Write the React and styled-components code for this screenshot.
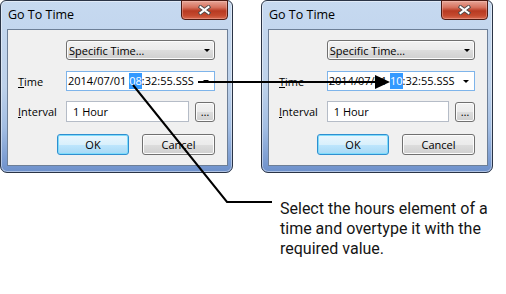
import React from 'react'
import styled, { createGlobalStyle } from 'styled-components'

const GlobalStyle = createGlobalStyle`
  html, body { margin: 0; padding: 0; background: #fff; }
  body { font-family: "Open Sans", "Liberation Sans", sans-serif; }
`

const Page = styled.div`
  position: relative;
  width: 506px;
  height: 294px;
  overflow: hidden;
  background: #fff;
`

const Windows = styled.div`
  display: flex;
  gap: 28px;
  align-items: flex-start;
`

const Window = styled.div`
  box-sizing: border-box;
  width: ${p => p.$w}px;
  height: 173px;
  border: 1px solid #2a3446;
  border-radius: 6px 6px 7px 7px;
  background: linear-gradient(180deg, #c6d9f0 0%, #bdd1ea 50%, #a3bee3 74%, #6d90cb 100%);
  box-shadow: inset 0 0 0 1px rgba(255, 255, 255, 0.45);
  display: flex;
  flex-direction: column;
  padding: 0 4px 6px 6px;
`

const TitleBar = styled.div`
  height: 28px;
  display: flex;
  justify-content: space-between;
  align-items: flex-start;
`

const Title = styled.div`
  padding: 5px 0 0 1px;
  font-size: 12.5px;
  color: #000;
`

const Close = styled.div`
  box-sizing: border-box;
  width: 47px;
  height: 20px;
  margin-top: -1px;
  border: 1px solid #4d1a12;
  border-radius: 0 0 4px 4px;
  background: linear-gradient(180deg, #e6a597 0%, #d7735f 35%, #b83a22 55%, #c4492e 80%, #d86a50 100%);
  box-shadow: inset 0 0 0 1px rgba(255, 210, 200, 0.35);
  display: flex;
  align-items: center;
  justify-content: center;
`

const Client = styled.div`
  flex: 1;
  border: 1px solid #6d7f97;
  background: #f0f0f0;
  padding: 10px 12px 0 10px;
`

const Row = styled.div`
  display: flex;
  align-items: center;
  height: ${p => p.$h || 20}px;
  margin-top: ${p => p.$mt || 0}px;
  justify-content: ${p => p.$end ? 'flex-end' : 'flex-start'};
  gap: ${p => p.$gap || 0}px;
`

const Label = styled.div`
  width: 48px;
  font-size: 11px;
  color: #000;
  u { text-decoration: underline; text-underline-offset: 1px; }
`

const Combo = styled.div`
  box-sizing: border-box;
  width: 149px;
  height: 20px;
  border: 1px solid #707070;
  border-radius: 3px;
  background: linear-gradient(180deg, #f2f2f2 0%, #ebebeb 50%, #dddddd 51%, #cfcfcf 100%);
  box-shadow: inset 0 0 0 1px #fcfcfc;
  display: flex;
  align-items: center;
  justify-content: space-between;
  padding: 0 4px 0 2px;
  font-size: 11px;
  color: #000;
`

const Arrow = styled.span`
  width: 0;
  height: 0;
  border-left: ${p => p.$s}px solid transparent;
  border-right: ${p => p.$s}px solid transparent;
  border-top: ${p => p.$s}px solid #000;
`

const Field = styled.div`
  box-sizing: border-box;
  width: ${p => p.$w}px;
  height: ${p => p.$h || 20}px;
  border: 1px solid ${p => p.$focus ? '#7eb4ea' : '#b5bcc7'};
  background: #fff;
  display: flex;
  align-items: center;
  justify-content: space-between;
  padding: 0 5px 0 ${p => p.$pl}px;
  font-size: 11px;
  color: #000;
  white-space: pre;
`

const Sel = styled.span`
  display: inline-block;
  background: #3399ff;
  color: #fff;
  line-height: 16px;
`

const Button = styled.div`
  box-sizing: border-box;
  width: ${p => p.$w}px;
  height: ${p => p.$h || 21}px;
  border: 1px solid ${p => p.$default ? '#2f8fd0' : '#707070'};
  border-radius: 3px;
  background: ${p => p.$default
    ? 'linear-gradient(180deg, #eaf6fd 0%, #d9f0fc 50%, #bee6fd 51%, #a7d9f5 100%)'
    : 'linear-gradient(180deg, #f2f2f2 0%, #ebebeb 50%, #dddddd 51%, #cfcfcf 100%)'};
  box-shadow: inset 0 0 0 1px ${p => p.$default ? '#7fdcfb' : '#fcfcfc'};
  display: flex;
  align-items: center;
  justify-content: center;
  margin-left: ${p => p.$ml || 0}px;
  font-size: 11px;
  color: #000;
`

const Caption = styled.div`
  margin: 26px 0 0 280px;
  font-family: Roboto, "Liberation Sans", sans-serif;
  font-size: 16px;
  line-height: 20px;
  color: #151515;
`

const Overlay = styled.svg`
  position: absolute;
  left: 0;
  top: 0;
  pointer-events: none;
`

function CloseGlyph() {
  return (
    <svg width="13" height="10" viewBox="0 0 13 10">
      <path d="M2.5 2 L10.5 8 M10.5 2 L2.5 8" stroke="#4a4a4a" strokeWidth="3.8" strokeLinecap="square" fill="none" />
      <path d="M2.5 2 L10.5 8 M10.5 2 L2.5 8" stroke="#fff" strokeWidth="2" strokeLinecap="square" fill="none" />
    </svg>
  )
}

function Dialog({ w, hour }) {
  return (
    <Window $w={w}>
      <TitleBar>
        <Title>Go To Time</Title>
        <Close><CloseGlyph /></Close>
      </TitleBar>
      <Client>
        <Row>
          <Label />
          <Combo>
            <span>Specific Time…</span>
            <Arrow $s={3.5} />
          </Combo>
        </Row>
        <Row $mt={11}>
          <Label><u>T</u>ime</Label>
          <Field $w={149} $pl={1} $focus>
            <span>2014/07/01 <Sel>{hour}</Sel>:32:55.SSS</span>
            <Arrow $s={3} />
          </Field>
        </Row>
        <Row $mt={10} $h={21}>
          <Label><u>I</u>nterval</Label>
          <Field $w={123} $h={21} $pl={6}>1 Hour</Field>
          <Button $w={20} $h={20} $ml={6}>…</Button>
        </Row>
        <Row $mt={12} $h={21} $end $gap={13}>
          <Button $w={72} $default>OK</Button>
          <Button $w={73}>Cancel</Button>
        </Row>
      </Client>
    </Window>
  )
}

export default function App() {
  return (
    <Page>
      <GlobalStyle />
      <Windows>
        <Dialog w={233} hour="08" />
        <Dialog w={232} hour="10" />
      </Windows>
      <Caption>
        Select the hours element of a<br />
        time and overtype it with the<br />
        required value.
      </Caption>
      <Overlay width="506" height="294" viewBox="0 0 506 294">
        <line x1="198" y1="82" x2="377" y2="82" stroke="#000" strokeWidth="2" />
        <polygon points="375,75 390,82 375,89" fill="#000" />
        <polyline points="133,85 227,202 272,202" stroke="#000" strokeWidth="2" fill="none" />
      </Overlay>
    </Page>
  )
}
